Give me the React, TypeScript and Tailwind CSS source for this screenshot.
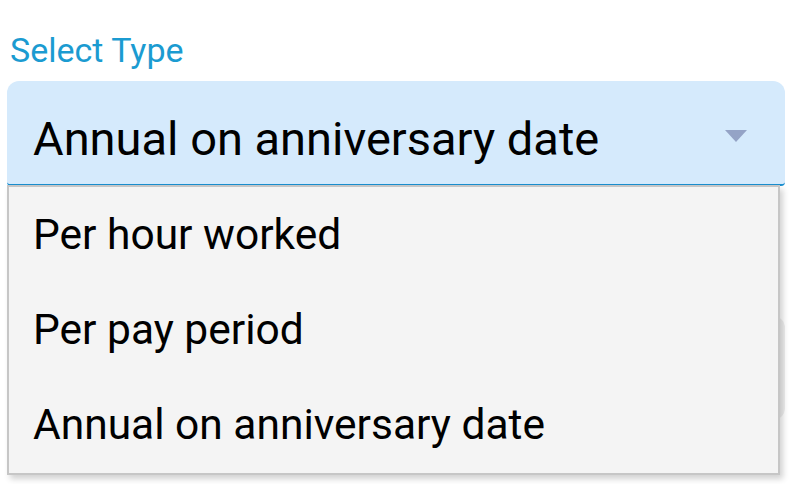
import { useState } from 'react'

const options = ['Per hour worked', 'Per pay period', 'Annual on anniversary date']

export default function App() {
  const [value, setValue] = useState(options[2])
  const [open, setOpen] = useState(true)

  return (
    <div className="w-[792px] h-[484px] bg-white overflow-hidden font-['Roboto',_'Liberation_Sans',_sans-serif]">
      <div className="relative px-[7px] pt-[28px]">
        <label className="block pl-[3px] text-[34px] leading-[44px] text-[#1b9bd1]">Select Type</label>

        {/* Select field */}
        <button
          onClick={() => setOpen(!open)}
          className="mt-[9px] w-full h-[105px] flex items-center justify-between pt-[12px] pl-[26px] pr-[38px] bg-[#d5eafc] rounded-t-[12px] rounded-b-[4px] border-b-2 border-[#1a8fd0] text-left"
        >
          <span className="text-[47px] text-black leading-none">{value}</span>
          <svg width="22" height="12" viewBox="0 0 22 12" className="-mt-[6px]">
            <path d="M0 0 L22 0 L11 12 Z" fill="#94a3c6" />
          </svg>
        </button>

        {/* Next field, partly hidden by the menu */}
        <div className="mt-[130px] w-full h-[104px] bg-[#efefef] rounded-[12px]" />

        {/* Options menu */}
        {open && (
          <ul className="absolute left-[7px] top-[185px] w-[773px] pt-[1px] bg-[#f4f4f4] border-2 border-[#c6c6c6] shadow-[3px_4px_6px_rgba(0,0,0,0.18)]">
            {options.map((opt) => (
              <li
                key={opt}
                onClick={() => {
                  setValue(opt)
                  setOpen(false)
                }}
                className="h-[95px] flex items-center pl-[24px] text-[42.5px] text-black leading-none cursor-pointer"
              >
                {opt}
              </li>
            ))}
          </ul>
        )}
      </div>
    </div>
  )
}
